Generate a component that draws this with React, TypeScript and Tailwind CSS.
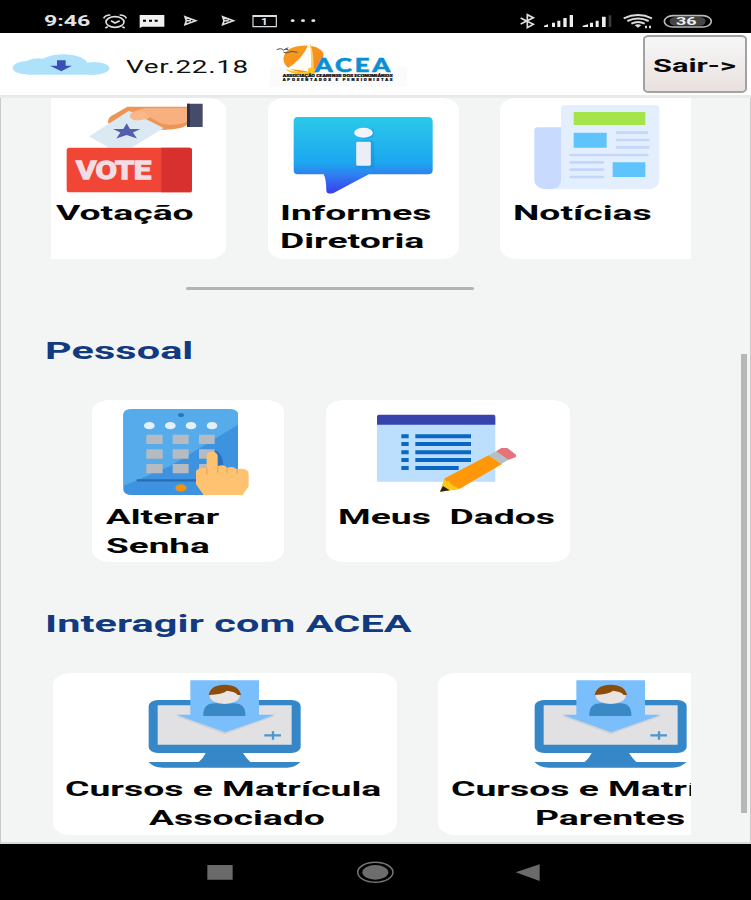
import type { ReactNode } from "react";

type IconProps = { box: string; className: string; children: ReactNode };

function Art({ box, className, children }: IconProps) {
  return (
    <svg viewBox={box} preserveAspectRatio="none" className={`block shrink-0 ${className}`}>
      {children}
    </svg>
  );
}

// Wide lettering used across the app; the stretch is chosen by each caller
function Wide({ children, className = "scale-x-[1.85]" }: { children: ReactNode; className?: string }) {
  return <span className={`block w-max origin-left whitespace-pre ${className}`}>{children}</span>;
}

function StatusBar() {
  return (
    <div className="flex h-[33px] shrink-0 items-start bg-black pt-[12px] pl-[44px] text-[#e4e4e4]">
      <div className="-mt-[2px] h-[22px] w-[57.67px] text-[15px] leading-[22px] font-bold">
        <Wide className="scale-x-[1.54]">9:46</Wide>
      </div>
      <Art box="305 36 650 56" className="h-[18.67px] w-[216.67px]">
        <g fill="none" stroke="#dedede" strokeWidth="5">
          <ellipse cx="344" cy="66" rx="27" ry="16" />
          <path d="M332 62l12 7 14-7M310 55q4-10 20-10M378 55q-4-10-20-10M322 80l-7 4M366 80l7 4" />
          <path d="M758 47h70v33h-70zM758 49h70" strokeWidth="3.5" />
        </g>
        <path d="M418 45h74v35h-66l-8 4z" fill="#f0f0f0" />
        <path d="M428 62h9M446 62h9M463 62h9" stroke="#000" strokeWidth="6" />
        <g fill="none" stroke="#e0e0e0" strokeWidth="5">
          <path d="M554 50l32 12-32 12 4-12zM667 50l32 12-32 12 4-12zM560 62h12M673 62h12" />
        </g>
        <text x="782" y="74" fill="#eee" fontSize="28" fontWeight="700" textLength="20" lengthAdjust="spacingAndGlyphs" className="font-[Roboto]">1</text>
        <g fill="#e4e4e4">
          <ellipse cx="877" cy="62" rx="6" ry="4" />
          <ellipse cx="908" cy="62" rx="6" ry="4" />
          <ellipse cx="939" cy="62" rx="6" ry="4" />
        </g>
      </Art>
      <Art box="430 36 590 56" className="ml-[200px] h-[18.67px] w-[196.67px]">
        <path d="M438 54l38 19-18 10V44l18 9-38 19" fill="none" stroke="#dedede" strokeWidth="5" />
        <path d="M508 77l12-4v8h-12zM532 68h9v13h-9zM548 62h9v19h-9zM566 54h10v27h-10zM585 45h10v36h-10zM624 77l16-4v8h-16zM646 68h9v13h-9zM663 62h9v19h-9zM682 50h11v31h-11z" fill="#eee" />
        <path d="M702 46h8v35h-8z" fill="#3c3c3c" />
        <g fill="none" stroke="#dcdcdc" strokeWidth="6">
          <path d="M747 55q43-20 85 0M758 63q32-15 64 0M770 71q20-10 40 0" />
          <rect x="869" y="47" width="141" height="34" rx="26" ry="17" stroke="#b9b9b9" strokeWidth="5" />
        </g>
        <path d="M780 76q10-6 20 0l-10 7zM811 77h6v8h-6zM823 77h6v8h-6z" fill="#ddd" />
        <rect x="885" y="51" width="108" height="26" rx="18" ry="12" fill="#454545" />
        <text x="904" y="76" fill="#eee" fontSize="34" fontWeight="700" textLength="62" lengthAdjust="spacingAndGlyphs" className="font-[Roboto]">36</text>
      </Art>
    </div>
  );
}

function Logo() {
  return (
    <Art box="0 0 447 150" className="h-[50px] w-[149px]">
      <defs>
        <linearGradient id="sun" x1="0" y1="0" x2="1" y2="1">
          <stop offset="0" stopColor="#f5a01f" />
          <stop offset="1" stopColor="#f7861c" />
        </linearGradient>
      </defs>
      <rect x="0" y="80" width="412" height="60" fill="#fbfbfb" />
      <path d="M40 56Q44 20 96 17q48-3 64 22v20l-26 34-36 4q-56-6-58-41z" fill="url(#sun)" />
      <path d="M116 12q-18 46-66 74 36 2 72 10 8-44-2-86z" fill="#fffdf5" />
      <path d="M122 12q12 40 8 84l-8 0q4-44-2-84z" fill="#fbd06a" />
      <path d="M112 99l4-16 18 2 4 14z" fill="#ffc21f" />
      <path d="M46 88q40 14 88 6v9l-32 2q-40-2-56-17z" fill="#f9c21c" />
      <path d="M20 29q14-6 20 1 8-5 15-1M40 36l8 3 18-5 16 3M45 28l10-5" fill="none" stroke="#4d4d4d" strokeWidth="3" />
      <g transform="translate(134 97) scale(1.35 1)">
        <text x="0" y="0" fill="#0990d3" stroke="#0990d3" strokeWidth="1.5" fontSize="57" fontWeight="900" textLength="168" lengthAdjust="spacing" className="font-[Lato]">ACEA</text>
      </g>
      <g fill="#111" className="font-[Roboto]" fontWeight="900" stroke="#111" strokeWidth=".6">
        <text x="38" y="110" fontSize="8" textLength="330" lengthAdjust="spacingAndGlyphs">ASSOCIAÇÃO CEARENSE DOS ECONOMIÁRIOS</text>
        <g transform="translate(38 124) scale(1.6 1)">
          <text x="0" y="0" fontSize="8" textLength="206" lengthAdjust="spacing">APOSENTADOS E PENSIONISTAS</text>
        </g>
      </g>
    </Art>
  );
}

function Header() {
  return (
    <header className="flex h-[65px] shrink-0 items-start border-b-[3px] border-[#e9eaea] bg-white pt-[2px]">
      <Art box="36 155 294 72" className="mt-[17px] ml-[12px] h-[24px] w-[98px]">
        <g fill="#aee2fb">
          <ellipse cx="82" cy="202" rx="44" ry="20" />
          <ellipse cx="116" cy="194" rx="44" ry="20" />
          <ellipse cx="190" cy="191" rx="72" ry="29" />
          <ellipse cx="282" cy="204" rx="46" ry="19" />
          <path d="M82 196h200v27H82z" />
        </g>
        <path d="M171 180h26v16h19l-32 17-34-17h21z" fill="#3a50b4" />
      </Art>
      <div className="mt-[19.5px] ml-[16px] w-[136px] text-[18.5px] leading-[24px] tracking-[0.4px] text-[#111]">
        <Wide className="scale-x-[1.51]">Ver.22.18</Wide>
      </div>
      <div className="mt-[5px] ml-[8px]">
        <Logo />
      </div>
      <button className="mr-[4px] ml-auto h-[58px] w-[104px] shrink-0 rounded-[6px/4px] border-[2.5px] border-[#a3a1a1] bg-linear-to-b from-[#f7f7f7] to-[#e9e1df] pt-[4px] pl-[8px] text-left text-[19px] leading-[24px] font-bold text-[#0a0a0a]">
        <Wide className="scale-x-[1.62]">{"Sair->"}</Wide>
      </button>
    </header>
  );
}

function VoteArt() {
  return (
    <Art box="70 30 450 280" className="mt-[2px] ml-[12px] h-[93px] w-[150px]">
      <path d="M205 100q-2-18 18-26l40-24h180v54q-14 14-70 16z" fill="#ee9455" />
      <path d="M276 66l40-12h127v42q-44 16-78 5l-40-22z" fill="#f8b080" />
      <path d="M148 140l120-78 104 52-94 58h-72z" fill="#dbe9f3" />
      <path d="M272 72q20-12 44-4 16 8 12 18l-34 6q-28-2-22-20z" fill="#fbb689" />
      <path d="M442 41h47v70h-47z" fill="#454b69" />
      <path d="M442 41h9v70h-9z" fill="#293047" />
      <path d="M261 100l10 17h31l-22 11 12 18-31-11-31 11 12-18-22-11h31z" fill="#525fae" />
      <rect x="81" y="174" width="376" height="134" rx="8" fill="#f14635" />
      <path d="M365 174h84q8 0 8 8v118q0 8-8 8h-84z" fill="#d8302e" />
      <g transform="translate(109 267) scale(1.2 1)">
        <text x="0" y="0" fill="#f3dde4" stroke="#f3dde4" strokeWidth="4" fontSize="78" fontWeight="700" textLength="188" lengthAdjust="spacing" className="font-[Roboto]">VOTE</text>
      </g>
    </Art>
  );
}

function InfoArt() {
  return (
    <Art box="95 76 430 240" className="mt-[17px] ml-[24px] h-[80px] w-[143px]">
      <defs>
        <linearGradient id="bubble" x1="0" y1="0" x2="0" y2="1">
          <stop offset="0" stopColor="#2bc9ea" />
          <stop offset=".6" stopColor="#1ca6ef" />
          <stop offset=".75" stopColor="#2f80f0" />
          <stop offset="1" stopColor="#3a3cf0" />
        </linearGradient>
      </defs>
      <path d="M112 82h392q14 0 14 13v146q0 13-14 13H326l-106 56q-22 6-22-10 0-32-8-46h-78q-12 0-12-13V95q0-13 12-13z" fill="url(#bubble)" />
      <path d="M292 236V154q44-6 50 4v78zM288 134q10-20 54-16l-2 24q-30 14-52-8z" fill="#1684c8" opacity=".35" />
      <ellipse cx="310" cy="129" rx="28" ry="15" fill="#f4f5fc" />
      <rect x="288" y="156" width="44" height="72" rx="4" fill="#eceef6" />
    </Art>
  );
}

function NewsArt() {
  return (
    <Art box="160 40 384 264" className="mt-[5px] ml-[33px] h-[88px] w-[128px]">
      <path d="M256 46h270q13 0 13 10v212q0 31-40 31H205l39-30V56q0-10 12-10z" fill="#e3effe" />
      <path d="M174 113h70v156q0 30-38 30-42 0-42-30V122q0-9 10-9z" fill="#c8dafd" />
      <path d="M282 67h215v39H282z" fill="#a5e549" />
      <path d="M282 129h99v45h-99zM399 218h98v44h-98z" fill="#5fc4fb" />
      <path d="M412 129h90M412 151h94M412 173h94M273 196h230M273 218h97M273 240h97M273 262h97" stroke="#c5d6fb" strokeWidth="8" strokeLinecap="round" />
    </Art>
  );
}

function KeypadArt() {
  return (
    <Art box="275 234 385 264" className="mt-[8px] ml-[29.5px] h-[88px] w-[128.33px]">
      <rect x="279" y="238" width="344" height="257" rx="24" ry="16" fill="#3d93df" />
      <path d="M303 238h296q20 0 24 12v34L420 408l-141 60V254q0-16 24-16z" fill="#56abea" />
      <path d="M530 358q46-6 50 50h-40z" fill="#2672c0" />
      <ellipse cx="452" cy="255" rx="9" ry="6" fill="#3175b8" />
      <g fill="#e3f0fb">
        <ellipse cx="357" cy="287" rx="16" ry="11" />
        <ellipse cx="420" cy="287" rx="16" ry="11" />
        <ellipse cx="482" cy="287" rx="16" ry="11" />
        <ellipse cx="545" cy="287" rx="16" ry="11" />
      </g>
      <path d="M348 314h49v28h-49zM427 314h48v28h-48zM506 314h47v28h-47zM348 358h49v28h-49zM427 358h48v28h-48zM506 358h47v28h-47zM348 402h49v28h-49zM427 402h48v28h-48zM506 402h25v28h-25z" fill="#b6bac1" />
      <path d="M319 451h182" stroke="#286db4" strokeWidth="7" />
      <ellipse cx="452" cy="474" rx="17" ry="11" fill="#f4940c" />
      <path d="M520 495l-23-32v-40q4-10 32-10v-36q2-12 16-12t17 12v32q20-8 28 4 20-6 28 4 36-4 37 14v38l-18 26z" fill="#ffc271" />
      <path d="M529 414v20M562 410v18M590 414v14M620 418v14" stroke="#f0a757" strokeWidth="4" />
    </Art>
  );
}

function ListArt() {
  return (
    <Art box="195 66 430 244" className="mt-[12px] ml-[49px] h-[81.33px] w-[143.33px]">
      <path d="M201 80h355v195H201z" fill="#bbdffd" />
      <path d="M206 74h345q5 0 5 6v24H201V80q0-6 5-6z" fill="#3644ab" />
      <path d="M274 139h22M316 139h167M274 162h22M316 162h167M274 187h22M316 187h167M274 210h22M316 210h167M274 234h22M316 234h130" stroke="#0c67c4" strokeWidth="12" />
      <path d="M404 265l132-69 40 26-128 75-58 8z" fill="#ff9708" />
      <path d="M404 265q-4 9 14 9 0 10 30 22l-58 9z" fill="#ffc81d" />
      <path d="M399 288l20 13-29 4z" fill="#222" />
      <path d="M536 196l22-12 40 24-24 14z" fill="#b4c0c6" />
      <path d="M558 184l16-10h18l26 20v7l-22 8z" fill="#e5737a" />
    </Art>
  );
}

function CourseArt({ className }: { className: string }) {
  return (
    <Art box="352 236 466 270" className={`h-[90px] w-[155.33px] ${className}`}>
      <rect x="357" y="299" width="456" height="159" rx="28" ry="18" fill="#3587c8" />
      <path d="M384 315h402v118H384z" fill="#e1e1e3" />
      <path d="M528 458h112q10 16 22 27h150q-16 17-40 17H400q-30 0-43-17h150q14-11 21-27z" fill="#3587c8" />
      <path d="M440 348l145 54 150-54z" fill="#cfd1d6" />
      <path d="M482 240h206v103h48l-149 53-147-53h42z" fill="#7abffb" />
      <path d="M521 347q-2-38 34-38h58q36 0 34 38z" fill="#3b88c7" />
      <ellipse cx="585" cy="286" rx="45" ry="25" fill="#e9e4e1" />
      <path d="M537 284q6-31 48-31t49 31h-10q-6-10-32-13-14 11-55 13z" fill="#8c4c0b" />
      <path d="M704 405h50M730 393v25" stroke="#4a98d2" strokeWidth="7" />
    </Art>
  );
}

function Card({ className, children }: { className: string; children: ReactNode }) {
  return <article className={`shrink-0 overflow-hidden bg-white ${className}`}>{children}</article>;
}

function Label({ className, children }: { className: string; children: ReactNode }) {
  return (
    <div className={`text-[20.5px] leading-[28.4px] font-bold text-[#050505] ${className}`}>
      {children}
    </div>
  );
}

function Heading({ className, children }: { className: string; children: ReactNode }) {
  return (
    <h2 className={`ml-[43.5px] h-[28px] shrink-0 text-[23px] leading-[28px] font-bold tracking-[0.05px] text-[#113a80] ${className}`}>
      <Wide className="scale-x-[1.8]">{children}</Wide>
    </h2>
  );
}

function Content() {
  return (
    <main className="flex min-h-0 flex-1 border-x border-b-2 border-x-[#c9caca] border-b-[#d9dada] bg-[#f3f5f5]">
      <div className="flex w-[690px] shrink-0 flex-col overflow-hidden">
        <div className="flex h-[161px] shrink-0 pl-[50px]">
          <Card className="mr-[42px] w-[175px] rounded-tr-[18px_12px] rounded-br-[18px_12px]">
            <VoteArt />
            <Label className="mt-[6px] ml-[5px]"><Wide className="scale-x-[1.82]">Votação</Wide></Label>
          </Card>
          <Card className="mr-[41px] w-[191px] rounded-[18px/12px]">
            <InfoArt />
            <Label className="mt-[4px] ml-[11.5px]">
              <Wide className="scale-x-[1.82]">Informes</Wide>
              <Wide className="scale-x-[1.82]">Diretoria</Wide>
            </Label>
          </Card>
          <Card className="w-[220px] rounded-[18px/12px]">
            <NewsArt />
            <Label className="mt-[8px] ml-[13px]"><Wide className="scale-x-[1.82]">Notícias</Wide></Label>
          </Card>
        </div>
        <div className="mt-[28px] ml-[185px] h-[3px] w-[288px] shrink-0 rounded-full bg-[#b0b4b3]" />
        <Heading className="mt-[48px]">Pessoal</Heading>
        <div className="mt-[34px] flex h-[162px] shrink-0 gap-[42px] pl-[91px]">
          <Card className="w-[192px] rounded-[18px/12px]">
            <KeypadArt />
            <Label className="mt-[7.4px] ml-[13.5px]">
              <Wide className="scale-x-[1.8]">Alterar</Wide>
              <Wide className="scale-x-[1.8]">Senha</Wide>
            </Label>
          </Card>
          <Card className="w-[244px] rounded-[18px/12px]">
            <ListArt />
            <Label className="mt-[10.07px] ml-[12px]"><Wide className="scale-x-[1.82]">{"Meus  Dados"}</Wide></Label>
          </Card>
        </div>
        <Heading className="mt-[49px]">Interagir com ACEA</Heading>
        <div className="mt-[34px] flex h-[162px] shrink-0 gap-[41px] pl-[52px]">
          <Card className="w-[344px] rounded-[18px/12px]">
            <CourseArt className="mt-[6px] ml-[94px]" />
            <Label className="mt-[6.4px] ml-[12px]">
              <Wide className="scale-x-[1.82]">Cursos e Matrícula</Wide>
              <Wide className="ml-[84px] scale-x-[1.82]">Associado</Wide>
            </Label>
          </Card>
          <Card className="w-[344px] rounded-[18px/12px]">
            <CourseArt className="mt-[6px] ml-[95px]" />
            <Label className="mt-[6.4px] ml-[13px]">
              <Wide className="scale-x-[1.82]">Cursos e Matrícula</Wide>
              <Wide className="ml-[84px] scale-x-[1.82]">Parentes</Wide>
            </Label>
          </Card>
        </div>
      </div>
      <div className="mt-[256px] ml-[50px] h-[459px] w-[6px] bg-[#b6b7b7]" />
    </main>
  );
}

function NavBar() {
  return (
    <nav className="flex h-[56px] shrink-0 items-start bg-black pt-[16px] pl-[200px]">
      <Art box="60 60 1040 72" className="h-[24px] w-[346.67px]">
        <path d="M82 75h76v44H82zM1079 73v50l-72-26z" fill="#6a6a6a" />
        <ellipse cx="586" cy="97" rx="53" ry="30" fill="none" stroke="#757575" strokeWidth="4.5" />
        <ellipse cx="586" cy="97" rx="39" ry="22" fill="#6d6d6d" />
      </Art>
    </nav>
  );
}

export default function App() {
  return (
    <div className="flex h-[900px] w-[751px] flex-col overflow-hidden bg-black font-[Roboto,sans-serif]">
      <StatusBar />
      <Header />
      <Content />
      <NavBar />
    </div>
  );
}
